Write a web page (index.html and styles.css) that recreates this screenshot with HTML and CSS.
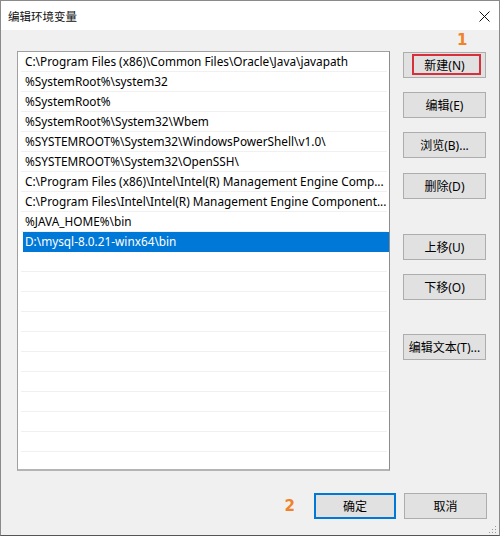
FILE: index.html
```html
<!DOCTYPE html>
<html lang="zh-CN">
<head>
<meta charset="utf-8">
<title>编辑环境变量</title>
<link rel="stylesheet" href="styles.css">
</head>
<body>
<div class="window">
  <div class="titlebar">
    <span class="title">编辑环境变量</span>
    <svg class="close" width="11" height="11" viewBox="0 0 11 11"><path d="M0.5 0.5L10.5 10.5M10.5 0.5L0.5 10.5" stroke="#111" stroke-width="1" fill="none"/></svg>
  </div>
  <div class="content">
    <div class="main">
      <div class="list">
        <div class="row">C:\Program Files (x86)\Common Files\Oracle\Java\javapath</div>
        <div class="row">%SystemRoot%\system32</div>
        <div class="row">%SystemRoot%</div>
        <div class="row">%SystemRoot%\System32\Wbem</div>
        <div class="row">%SYSTEMROOT%\System32\WindowsPowerShell\v1.0\</div>
        <div class="row">%SYSTEMROOT%\System32\OpenSSH\</div>
        <div class="row">C:\Program Files (x86)\Intel\Intel(R) Management Engine Comp...</div>
        <div class="row">C:\Program Files\Intel\Intel(R) Management Engine Component...</div>
        <div class="row">%JAVA_HOME%\bin</div>
        <div class="row selected">D:\mysql-8.0.21-winx64\bin</div>
        <div class="row"></div>
        <div class="row"></div>
        <div class="row"></div>
        <div class="row"></div>
        <div class="row"></div>
        <div class="row"></div>
        <div class="row"></div>
        <div class="row"></div>
        <div class="row"></div>
        <div class="row"></div>
        <div class="row"></div>
      </div>
      <div class="side">
        <div class="btn btn-new">新建(N)<span class="mark-box"></span><span class="num num-1">1</span></div>
        <div class="btn g14">编辑(E)</div>
        <div class="btn g14">浏览(B)...</div>
        <div class="btn g15">删除(D)</div>
        <div class="btn g35">上移(U)</div>
        <div class="btn g14">下移(O)</div>
        <div class="btn g34">编辑文本(T)...</div>
      </div>
    </div>
    <div class="footer">
      <span class="num num-2">2</span>
      <div class="btn btn-ok">确定</div>
      <div class="btn btn-cancel">取消</div>
    </div>
    <svg class="grip" width="8" height="8" viewBox="0 0 8 8">
      <rect x="6" y="0" width="1" height="1" fill="#999"/>
      <rect x="3" y="3" width="1" height="1" fill="#999"/>
      <rect x="6" y="3" width="1" height="1" fill="#999"/>
      <rect x="0" y="6" width="1" height="1" fill="#999"/>
      <rect x="3" y="6" width="1" height="1" fill="#999"/>
      <rect x="6" y="6" width="1" height="1" fill="#999"/>
    </svg>
  </div>
</div>
</body>
</html>
```

FILE: styles.css
```css
* { box-sizing: border-box; }
html, body { margin: 0; padding: 0; }
body {
  width: 500px;
  height: 536px;
  overflow: hidden;
  font-family: "Noto Sans", "Noto Sans CJK SC", sans-serif;
  font-size: 12px;
  color: #000;
  background: #fff;
}
.window {
  width: 500px;
  height: 536px;
  display: flex;
  flex-direction: column;
  border: 1px solid #8a8a8a;
  border-bottom-color: #555;
  background: #f0f0f0;
}
.titlebar {
  height: 29px;
  flex: none;
  background: #fff;
  display: flex;
  align-items: center;
  justify-content: space-between;
  padding: 0 9px 0 7px;
}
.title {
  font-family: "Noto Sans CJK SC", sans-serif;
  font-size: 11.5px;
  line-height: 14px;
  color: #111;
}
.close { margin-top: 1px; }
.content {
  flex: 1;
  position: relative;
  padding: 21px 12px 16px 16px;
  display: flex;
  flex-direction: column;
}
.main {
  display: flex;
  gap: 13px;
}
.list {
  width: 373px;
  height: 420px;
  flex: none;
  background: #fff;
  border: 1px solid #a0a0a0;
  border-right-color: #8c8c8c;
  border-bottom: 2px solid #b4b4b4;
  overflow: hidden;
  padding: 0 0 0 5px;
}
.row {
  height: 20px;
  line-height: 19px;
  font-size: 11.8px;
  white-space: nowrap;
  overflow: hidden;
  border-bottom: 1px solid #f0f0f0;
  margin-left: -2px;
  padding-left: 4px;
  margin-right: 2px;
}
.row.selected {
  background: #0078d7;
  color: #fff;
  border-bottom-color: #0078d7;
  margin-left: 0;
  padding-left: 2px;
  margin-right: 0;
}
.side {
  width: 83px;
  flex: none;
  display: flex;
  flex-direction: column;
  padding-top: 1px;
}
.btn {
  position: relative;
  height: 26px;
  background: #e1e1e1;
  border: 1px solid #adadad;
  display: flex;
  align-items: center;
  justify-content: center;
  font-family: "Noto Sans", "Noto Sans CJK SC", sans-serif;
  font-size: 12px;
  white-space: nowrap;
}
.g14 { margin-top: 14px; }
.g15 { margin-top: 15px; }
.g34 { margin-top: 34px; }
.g35 { margin-top: 35px; }
.mark-box {
  position: absolute;
  left: 8px;
  top: 1px;
  right: 4px;
  bottom: 2px;
  border: 2px solid #d8303a;
}
.num {
  color: #f0832a;
  font-family: "DejaVu Sans", sans-serif;
  font-weight: bold;
  font-size: 15px;
  line-height: 16px;
}
.num-1 {
  position: absolute;
  left: 53px;
  top: -21px;
}
.footer {
  margin-top: auto;
  display: flex;
  align-items: center;
  justify-content: flex-end;
}
.num-2 { margin-right: 19px; }
.btn-ok {
  width: 82px;
  border: 2px solid #0078d7;
}
.btn-cancel {
  width: 83px;
  margin-left: 8px;
}
.grip {
  position: absolute;
  right: 2px;
  bottom: 1px;
}
```
